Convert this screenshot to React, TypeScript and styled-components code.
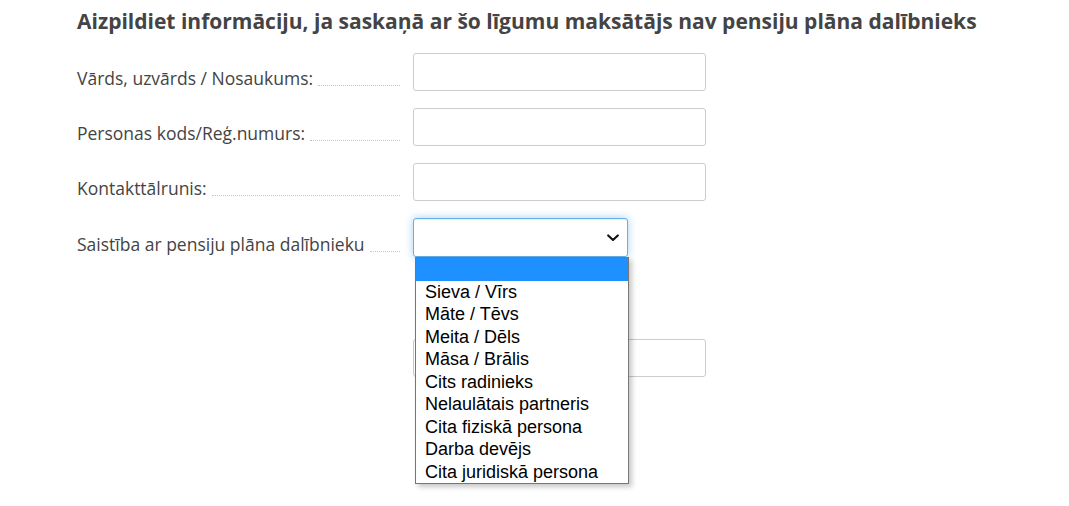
import React from 'react';
import styled, { createGlobalStyle } from 'styled-components';

const GlobalStyle = createGlobalStyle`
  html, body {
    margin: 0;
    padding: 0;
    background: #ffffff;
  }
  body {
    font-family: "Open Sans", "Liberation Sans", Arial, sans-serif;
    color: #444444;
  }
`;

const Page = styled.div`
  box-sizing: border-box;
  min-height: 100vh;
  padding: 6px 0 0 77px;
`;

const Heading = styled.h2`
  margin: 0 0 17px;
  font-size: 21px;
  line-height: 30px;
  font-weight: 700;
  color: #444444;
`;

const Form = styled.div`
  display: flex;
  flex-direction: column;
  gap: 17px;
`;

const Row = styled.div<{ $offset?: number }>`
  display: grid;
  grid-template-columns: 323px auto;
  column-gap: 13px;
  align-items: end;
  margin-top: ${(p) => p.$offset ?? 0}px;
`;

const Label = styled.div`
  display: flex;
  align-items: flex-end;
  font-size: 17.5px;
  line-height: 24px;
  padding-bottom: 1px;
  color: #444444;
  white-space: nowrap;
`;

const Leader = styled.span`
  flex: 1;
  margin: 0 0 4px 5px;
  border-bottom: 1px dotted #c4c4c4;
`;

const TextInput = styled.div`
  box-sizing: border-box;
  width: 293px;
  height: 38px;
  border: 1px solid #cccccc;
  border-radius: 3px;
  background: #ffffff;
`;

const SelectWrap = styled.div`
  position: relative;
  width: 215px;
`;

const SelectBox = styled.div`
  box-sizing: border-box;
  width: 215px;
  height: 39px;
  border: 1px solid #66afe9;
  border-radius: 3px;
  background: #ffffff;
  box-shadow: inset 0 1px 1px rgba(0, 0, 0, 0.075), 0 0 8px rgba(102, 175, 233, 0.6);
  display: flex;
  align-items: center;
  justify-content: flex-end;
  padding-right: 8px;
`;

const ListBox = styled.ul`
  position: absolute;
  top: 39px;
  left: 2px;
  box-sizing: border-box;
  width: 214px;
  margin: 0;
  padding: 0;
  list-style: none;
  background: #ffffff;
  border: 1px solid #767676;
  box-shadow: 3px 3px 5px rgba(0, 0, 0, 0.22);
  z-index: 10;
`;

const Option = styled.li<{ $active?: boolean }>`
  height: 22.5px;
  line-height: 22.5px;
  padding-left: 9px;
  font-family: "Liberation Sans", Arial, sans-serif;
  font-size: 18px;
  color: #000000;
  background: ${(p) => (p.$active ? '#1e90ff' : 'transparent')};
  white-space: nowrap;
`;

const Chevron = () => (
  <svg width="12" height="8" viewBox="0 0 12 8" fill="none">
    <path d="M1.2 1.4 L6 6 L10.8 1.4" stroke="#111111" strokeWidth="2.1" strokeLinecap="round" strokeLinejoin="round" />
  </svg>
);

const fields = ['Vārds, uzvārds / Nosaukums:', 'Personas kods/Reģ.numurs:', 'Kontakttālrunis:'];

const options = [
  '',
  'Sieva / Vīrs',
  'Māte / Tēvs',
  'Meita / Dēls',
  'Māsa / Brālis',
  'Cits radinieks',
  'Nelaulātais partneris',
  'Cita fiziskā persona',
  'Darba devējs',
  'Cita juridiskā persona',
];

export default function App() {
  return (
    <>
      <GlobalStyle />
      <Page>
        <Heading>Aizpildiet informāciju, ja saskaņā ar šo līgumu maksātājs nav pensiju plāna dalībnieks</Heading>
        <Form>
          {fields.map((f) => (
            <Row key={f}>
              <Label>
                {f}
                <Leader />
              </Label>
              <TextInput />
            </Row>
          ))}
          <Row>
            <Label>
              Saistība ar pensiju plāna dalībnieku
              <Leader />
            </Label>
            <SelectWrap>
              <SelectBox>
                <Chevron />
              </SelectBox>
              <ListBox>
                {options.map((o, i) => (
                  <Option key={i} $active={i === 0}>
                    {o || '\u00a0'}
                  </Option>
                ))}
              </ListBox>
            </SelectWrap>
          </Row>
          <Row $offset={65}>
            <span />
            <TextInput />
          </Row>
        </Form>
      </Page>
    </>
  );
}
